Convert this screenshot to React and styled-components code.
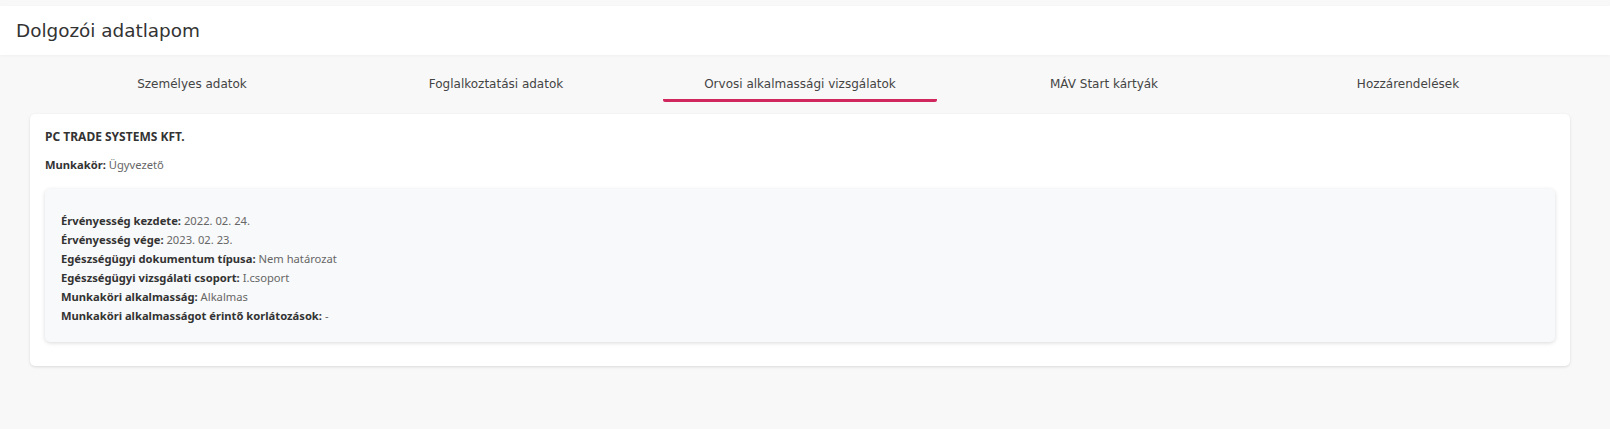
import React from "react";
import styled, { createGlobalStyle } from "styled-components";

const GlobalStyle = createGlobalStyle`
  html, body {
    margin: 0;
    padding: 0;
    background: #f8f8f8;
    font-family: "DejaVu Sans", "Noto Sans", sans-serif;
  }
`;

const tabs = [
  "Személyes adatok",
  "Foglalkoztatási adatok",
  "Orvosi alkalmassági vizsgálatok",
  "MÁV Start kártyák",
  "Hozzárendelések",
];

const details = [
  ["Érvényesség kezdete:", "2022. 02. 24."],
  ["Érvényesség vége:", "2023. 02. 23."],
  ["Egészségügyi dokumentum típusa:", "Nem határozat"],
  ["Egészségügyi vizsgálati csoport:", "I.csoport"],
  ["Munkaköri alkalmasság:", "Alkalmas"],
  ["Munkaköri alkalmasságot érintő korlátozások:", "-"],
];

const App = () => {
  return (
    <>
      <GlobalStyle />
      <Page>
        <Header>
          <Title>Dolgozói adatlapom</Title>
        </Header>
        <TabBar>
          {tabs.map((t, i) => (
            <Tab key={t} $active={i === 2}>
              {t}
            </Tab>
          ))}
        </TabBar>
        <Card>
          <Company>PC TRADE SYSTEMS KFT.</Company>
          <Line>
            <Label>Munkakör:</Label> <Value>Ügyvezető</Value>
          </Line>
          <Exam>
            {details.map(([l, v]) => (
              <Row key={l}>
                <Label>{l}</Label> <Value>{v}</Value>
              </Row>
            ))}
          </Exam>
        </Card>
      </Page>
    </>
  );
};

export default App;

const Page = styled.div`
  min-height: 429px;
  padding-top: 6px;
  box-sizing: border-box;
`;

const Header = styled.div`
  background: #fff;
  height: 49px;
  display: flex;
  align-items: center;
  padding: 0 16px;
  box-shadow: 0 1px 3px rgba(0, 0, 0, 0.03);
`;

const Title = styled.h1`
  margin: 0;
  font-size: 18.4px;
  font-weight: 400;
  color: #333;
`;

const TabBar = styled.div`
  display: grid;
  grid-template-columns: repeat(5, 1fr);
  align-items: start;
  margin: 0 50px 0 40px;
  height: 59px;
`;

const Tab = styled.div`
  display: flex;
  justify-content: center;
  align-items: flex-end;
  box-sizing: border-box;
  font-size: 12px;
  line-height: 16px;
  color: #444;
  margin: 0 15px;
  height: 47px;
  padding-bottom: 7px;
  border-bottom: 3px solid ${(p) => (p.$active ? "#d0275e" : "transparent")};
  border-radius: 0 0 2px 2px;
`;

const Card = styled.div`
  background: #fff;
  margin: 0 40px 0 30px;
  border-radius: 5px;
  box-shadow: 0 1px 3px rgba(0, 0, 0, 0.12);
  padding: 15px 15px 24px;
  font-family: "Noto Sans", sans-serif;
`;

const Company = styled.div`
  font-size: 12px;
  font-weight: 700;
  color: #333;
  line-height: 16px;
`;

const Line = styled.div`
  font-size: 11.2px;
  line-height: 16px;
  margin-top: 12px;
`;

const Label = styled.span`
  font-weight: 700;
  color: #333;
`;

const Value = styled.span`
  color: #666;
`;

const Exam = styled.div`
  margin-top: 16px;
  background: #f8f9fa;
  border-radius: 5px;
  box-shadow: 0 1px 4px rgba(0, 0, 0, 0.15);
  padding: 22px 16px 17px;
`;

const Row = styled.div`
  font-size: 11.2px;
  line-height: 19px;
`;
